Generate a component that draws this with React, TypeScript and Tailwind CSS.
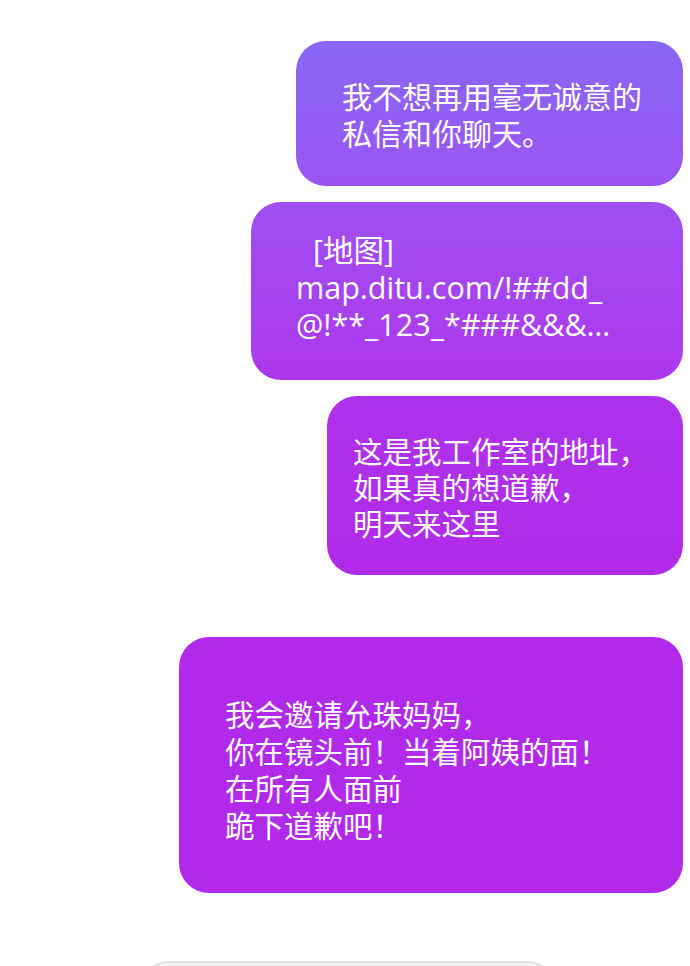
import React from 'react';

const cjk = "font-['Noto_Sans_CJK_SC',sans-serif]";

const App: React.FC = () => {
  return (
    <div className="h-[966px] w-[690px] overflow-hidden bg-white">
      <div className={`flex flex-col items-end pt-[41px] pr-[7px] text-white ${cjk}`}>
        <div className="flex h-[145px] w-[387px] items-center rounded-[30px] bg-linear-to-b from-[#8767f6] to-[#9b54f2] pl-[46px] text-[30px] leading-[37px]">
          <p>
            我不想再用毫无诚意的
            <br />
            私信和你聊天。
          </p>
        </div>

        <div className="mt-[16px] flex h-[178px] w-[432px] items-center rounded-[30px] bg-linear-to-b from-[#9f4ff1] to-[#ad37ec] pb-[8px] pl-[45px] font-['Open_Sans','Noto_Sans_CJK_SC',sans-serif] text-[30.5px] leading-[37px]">
          <p>
            <span className="pl-[17px]">[地图]</span>
            <br />
            map.ditu.com/!##dd_
            <br />
            @!**_123_*###&&&…
          </p>
        </div>

        <div className="mt-[16px] flex h-[179px] w-[356px] items-center rounded-[30px] bg-linear-to-b from-[#ad32eb] to-[#b12be9] pl-[26px] text-[29.5px] leading-[36px]">
          <p>
            这是我工作室的地址，
            <br />
            如果真的想道歉，
            <br />
            明天来这里
          </p>
        </div>

        <div className="mt-[62px] flex h-[256px] w-[504px] items-center rounded-[30px] bg-[#b12ae9] pt-[7px] pl-[46px] text-[29.5px] leading-[37px]">
          <p>
            我会邀请允珠妈妈，
            <br />
            你在镜头前！当着阿姨的面！
            <br />
            在所有人面前
            <br />
            跪下道歉吧！
          </p>
        </div>

        <div className="mt-[68px] mr-[126px] h-[40px] w-[418px] rounded-t-[30px] border-t-2 border-[#e2e2e2] bg-[#f4f4f4]" />
      </div>
    </div>
  );
};

export default App;
